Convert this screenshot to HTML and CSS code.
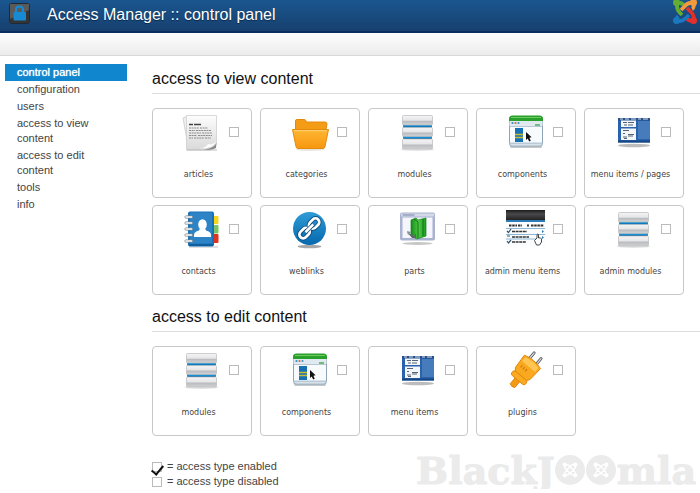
FILE: index.html
```html
<!DOCTYPE html>
<html lang="en">
<head>
  <meta charset="UTF-8">
  <title>Access Manager :: control panel</title>
  <link rel="stylesheet" href="styles.css">
</head>
<body>

  <!-- Shared icons -->
  <svg class="sprite" aria-hidden="true">
    <defs>
      <linearGradient id="silver" x1="0" y1="0" x2="0" y2="1">
        <stop offset="0" stop-color="#f4f4f5"/>
        <stop offset="0.5" stop-color="#e6e6e8"/>
        <stop offset="0.6" stop-color="#b9bbbf"/>
        <stop offset="1" stop-color="#d2d3d5"/>
      </linearGradient>
      <linearGradient id="orange" x1="0" y1="0" x2="0" y2="1">
        <stop offset="0" stop-color="#ffb733"/>
        <stop offset="1" stop-color="#f7960f"/>
      </linearGradient>
      <linearGradient id="blue" x1="0" y1="0" x2="0" y2="1">
        <stop offset="0" stop-color="#2f9bd6"/>
        <stop offset="1" stop-color="#0669ae"/>
      </linearGradient>
      <linearGradient id="green" x1="0" y1="0" x2="1" y2="0">
        <stop offset="0" stop-color="#148c1c"/>
        <stop offset="0.5" stop-color="#4fc845"/>
        <stop offset="1" stop-color="#1c9c20"/>
      </linearGradient>
      <linearGradient id="black" x1="0" y1="0" x2="0" y2="1">
        <stop offset="0" stop-color="#1b1b1b"/>
        <stop offset="0.4" stop-color="#4a4a4c"/>
        <stop offset="1" stop-color="#222"/>
      </linearGradient>
      <linearGradient id="paper" x1="0" y1="0" x2="0" y2="1">
        <stop offset="0" stop-color="#fdfdfd"/>
        <stop offset="1" stop-color="#d9d9d9"/>
      </linearGradient>
    </defs>

    <symbol id="icon-articles" viewBox="0 0 44 44">
      <path d="M5 8l5-2 3 24-3 6z" fill="#efefef" stroke="#c4c4c4" stroke-width=".7"/>
      <path d="M8.500 5.500h30V33c-1 4-3 6-7 7h-23z" fill="url(#paper)" stroke="#cfcfcf" stroke-width=".8"/>
      <path d="M9 40h30" stroke="#bbb" stroke-width="1"/>
      <path d="M11 14.500h4m1 0h7" stroke="#444" stroke-width="1.700"/>
      <path d="M11 18h10m1 0h8M11 20.500h6m1 0h15M11 23h12m1 0h10M11 25.500h8m1 0h14M11 28h4m1 0h10m1 0h6" stroke="#8b8b8b" stroke-width="1" stroke-dasharray="2 .6"/>
      <path d="M26 39c6 0 10-2 12.500-6l-.5 5c-4 2-8 2-12 1z" fill="#888"/>
      <path d="M21 38c6 0 8-2 9-4 3 1 6 0 8.500-3-3 6-9 8-17.500 7z" fill="#fff"/>
    </symbol>

    <symbol id="icon-folder" viewBox="0 0 44 44">
      <ellipse cx="24" cy="39.500" rx="14" ry="1.500" fill="#e8e4de"/>
      <path d="M9.500 22V11q0-1.500 1.500-1.500h7q1.500 0 2 1.500l.5 1H39q2 0 2 2l-1.500 8z" fill="#f59c17" stroke="#e38a0c" stroke-width="1"/>
      <path d="M6.500 19.500h36l-3.500 17q-.3 2-2 2H12q-1.700 0-2-2z" fill="url(#orange)" stroke="#e58b0b" stroke-width="1"/>
      <path d="M8 20.700h33" stroke="#ffd27a" stroke-width="1"/>
    </symbol>

    <symbol id="icon-modules" viewBox="0 0 44 44">
      <ellipse cx="23.500" cy="39.500" rx="17" ry="1.500" fill="#e4e4e4"/>
      <path d="M9 15h29v14H9z" fill="#1590d6"/>
      <path d="M10 17h27M10 28.500h27" stroke="#0b65a3" stroke-width="1"/>
      <rect x="8.500" y="5.500" width="30" height="9.500" rx="1" fill="url(#silver)" stroke="#b9babd" stroke-width=".7"/>
      <rect x="8.500" y="17.500" width="30" height="9" rx="1" fill="url(#silver)" stroke="#b9babd" stroke-width=".7"/>
      <rect x="8.500" y="29" width="30" height="10" rx="1" fill="url(#silver)" stroke="#b9babd" stroke-width=".7"/>
    </symbol>

    <symbol id="icon-components" viewBox="0 0 44 44">
      <rect x="8" y="35" width="32" height="3" rx="1.500" fill="#c3c8cc"/>
      <rect x="7.500" y="6.500" width="33" height="29.500" rx="2.500" fill="#f8fbfd" stroke="#8fa5b6" stroke-width="1"/>
      <path d="M7 11V9q0-3.500 3.500-3.500h27Q41 5.500 41 9v2z" fill="#28a02b"/>
      <path d="M9 7.500h30" stroke="#6dcb5d" stroke-width="1"/>
      <path d="M7.500 11h33v5h-33z" fill="#dfe9ef"/>
      <path d="M8 16.500h32" stroke="#9db0bf" stroke-width=".7"/>
      <circle cx="10.500" cy="13" r="1.100" fill="#2f91c9"/><circle cx="13.500" cy="13" r="1.100" fill="#e9632c"/><circle cx="16.500" cy="13" r="1.100" fill="#3b95cd"/>
      <path d="M33 15h5" stroke="#4fab53" stroke-width="1.500"/>
      <path d="M8 33.500h32" stroke="#b9c9d6" stroke-width="2"/>
      <rect x="13" y="18" width="8" height="14" fill="#1672b5"/>
      <path d="M13 24.500h8M13 27.500h8" stroke="#c8bd37" stroke-width="1.500"/>
      <path d="M24 22v8l1.700-1.500 1.500 3 1.600-.8-1.400-3 2.200-.4z" fill="#111"/>
    </symbol>

    <symbol id="icon-menu" viewBox="0 0 44 44">
      <ellipse cx="24" cy="35.500" rx="16" ry="1.700" fill="#bcbcbc"/>
      <rect x="8" y="8" width="32" height="24.500" fill="#2963ae"/>
      <path d="M8 8h32v2.500H8z" fill="#274f88"/>
      <path d="M10 9h3m2 0h4m2 0h5m2 0h3m2 0h5" stroke="#d9e3ef" stroke-width="1"/>
      <path d="M28 11h12v18H28z" fill="#477cbc"/>
      <path d="M11 10.500h15V17H11zM11 18.500h15V30H11z" fill="#f4f6f8"/>
      <path d="M13 12.500h4m1 0h6M14 15h3m1 0h5M13 20.500h6M13 23.500h2m3 1h6M13 27h4m1-1h5M14 28.500h3" stroke="#536478" stroke-width="1"/>
      <path d="M8 31.500h32" stroke="#164783" stroke-width="2"/>
    </symbol>

    <symbol id="icon-contacts" viewBox="0 0 44 44">
      <path d="M11 40h29" stroke="#d6d6d6" stroke-width="1.500"/>
      <rect x="34" y="9" width="6.500" height="8" rx="1" fill="#f7d51c"/>
      <rect x="34" y="18" width="6.500" height="8.500" rx="1" fill="#7cc565"/>
      <rect x="34" y="27" width="6.500" height="9" rx="1" fill="#df3520"/>
      <rect x="10" y="4.500" width="26" height="35" rx="2" fill="#1872b9"/>
      <rect x="12" y="5.500" width="22" height="31" rx="1" fill="#2c84c7"/>
      <path d="M11 38h24" stroke="#0c5894" stroke-width="1.500"/>
      <path d="M8 10h5.500M8 16h5.500M8 22h5.500M8 28h5.500M8 34h5.500" stroke="#77838c" stroke-width="3" stroke-linecap="round"/>
      <path d="M8 10h5.500M8 16h5.500M8 22h5.500M8 28h5.500M8 34h5.500" stroke="#fff" stroke-width="1.700" stroke-linecap="round"/>
      <ellipse cx="24.500" cy="17.500" rx="4.300" ry="5.300" fill="#fff"/>
      <path d="M16 30v-2q0-3.500 5-4.500l1-2h5l1 2q5 1 5 4.500v2z" fill="#fff"/>
    </symbol>

    <symbol id="icon-link" viewBox="0 0 44 44">
      <ellipse cx="23.500" cy="39.500" rx="12" ry="1.700" fill="#a8a8a8"/>
      <circle cx="23.500" cy="21.500" r="16.500" fill="url(#blue)"/>
      <g fill="none" transform="rotate(-45 23.500 21.500)">
        <g stroke="#0c4d80" stroke-width="4.500">
          <rect x="11" y="17.500" width="11.500" height="7.500" rx="3.700"/>
          <rect x="24.500" y="17.500" width="11.500" height="7.500" rx="3.700"/>
        </g>
        <g stroke="#fff" stroke-width="2.700">
          <rect x="11" y="17.500" width="11.500" height="7.500" rx="3.700"/>
          <rect x="24.500" y="17.500" width="11.500" height="7.500" rx="3.700"/>
          <path d="M18 21.300h11" stroke="#0c4d80" stroke-width="4"/>
          <path d="M18 21.300h11" stroke-width="2.500"/>
        </g>
      </g>
    </symbol>

    <symbol id="icon-parts" viewBox="0 0 44 44">
      <ellipse cx="23.500" cy="36.500" rx="15" ry="1.500" fill="#c6c6c6"/>
      <rect x="6" y="5.500" width="35" height="28" rx="2" fill="#a9b2cf"/>
      <path d="M7 6.500h33v3H7z" fill="#d4d9e8"/>
      <path d="M8.500 8h12" stroke="#7884ab" stroke-width="1"/>
      <rect x="8.500" y="10.500" width="30" height="20.500" fill="#f4f6fb"/>
      <path d="M17 13l5-2 2 2 8-2v18l-9 3-6-3z" fill="url(#green)" stroke="#16801c" stroke-width=".7"/>
      <path d="M20 12l4 3v16M29 12v17" stroke="#0f7417" stroke-width="1" fill="none"/>
      <path d="M13 25l5 6h4v-5l-2 3z" fill="#5d6764"/>
      <path d="M13 24l4 1-3 3z" fill="#8a9391"/>
    </symbol>

    <symbol id="icon-admin-menu" viewBox="0 0 44 44">
      <rect x="4" y="3" width="39" height="36" fill="#fbfcfd"/>
      <rect x="4" y="3" width="39" height="10" fill="url(#black)"/>
      <path d="M4 14h39" stroke="#2c7cb8" stroke-width="2"/>
      <path d="M7 18.500h8m1 0h4m5 0h2m2 0h13" stroke="#333" stroke-width="2" stroke-dasharray="2.500 .7"/>
      <path d="M4 21.500h39M4 27.500h39M4 32h35" stroke="#8fb8d4" stroke-width="1"/>
      <path d="M10 24.500h15M10 30h17M10 35h14" stroke="#333" stroke-width="1.500" stroke-dasharray="3 .6"/>
      <path d="M5 24l1.500 1.500L9 22M5 29h3M5 34l1.500 2L9 33" stroke="#35556e" stroke-width="1.200" fill="none"/>
      <path d="M40 23l2 1.500-2 1.500zM40 29l2 1.500-2 1.500z" fill="#2879b5"/>
      <path d="M35 31v-3.500q1-1 1.500 0V31q2-1 3 1v3l-2 3h-3l-2-4.500z" fill="#fff" stroke="#333" stroke-width=".9"/>
    </symbol>

    <symbol id="icon-plug" viewBox="0 0 44 44">
      <g transform="rotate(40 23 22)">
        <path d="M19 11V3M28 11V3" stroke="#5b5e62" stroke-width="3" stroke-linecap="round"/>
        <path d="M19 11V3M28 11V3" stroke="#d8dadd" stroke-width="1.200" stroke-linecap="round"/>
        <path d="M20.500 33h6v9q-3 2-6 0z" fill="#f59a12" stroke="#d67b08" stroke-width=".8"/>
        <path d="M13 11q10.500-3.500 21 0l-1 15q-2 4-5 5h-9q-3-1-5-5z" fill="#f9a81f" stroke="#dd850a" stroke-width=".9"/>
        <path d="M15 12q9-2.500 17 0v5H15z" fill="#ffc653"/>
        <rect x="14.500" y="29" width="18" height="5.500" rx="2.500" fill="#fbaa22" stroke="#dd850a" stroke-width=".9"/>
        <path d="M18 20v3M21 20v3M24 20v3" stroke="#c87308" stroke-width="1"/>
      </g>
    </symbol>

    <symbol id="joomla-mark" viewBox="0 0 24 24">
      <g fill="none" stroke="currentColor" stroke-width="2">
        <path d="M4 4q5-1 8 3l5 5q3 3 3 8M20 4q1 5-3 8l-5 5q-3 3-8 3M20 4q-5-1-8 3l-5 5q-3 3-3 8M4 4q-1 5 3 8l5 5q3 3 8 3"/>
      </g>
      <g fill="currentColor">
        <circle cx="4" cy="4" r="3.200"/><circle cx="20" cy="4" r="3.200"/>
        <circle cx="20" cy="20" r="3.200"/><circle cx="4" cy="20" r="3.200"/>
      </g>
    </symbol>
  </svg>

  <header class="header">
    <svg class="lock" viewBox="0 0 22 22" aria-hidden="true">
      <rect x=".5" y=".5" width="20" height="20" rx="2" fill="#343434" stroke="#202a35"/>
      <path d="M1 1h19v6L1 16z" fill="#5a5a5a"/>
      <path d="M7 10V6.500q0-3 3.500-3t3.500 3V10" fill="none" stroke="#168bd3" stroke-width="2"/>
      <rect x="4.500" y="9" width="12.500" height="8.500" rx="1" fill="#168bd3"/>
    </svg>
    <h1>Access Manager :: control panel</h1>
    <svg class="joomla" viewBox="0 0 24 24" aria-hidden="true">
      <g fill="none" stroke-width="3.800" stroke-linejoin="round">
        <path d="M4 3v3q0 4 3 7l2 2M4 3q4-1 7 2" stroke="#62ad34"/>
        <path d="M21 3h-3q-4 0-6 3l-4 4M21 3q0 5-2 6" stroke="#f39a3d"/>
        <path d="M21 21v-3q0-3-3-6l-4-4M21 21q-5 0-7-2" stroke="#e3302b"/>
        <path d="M4 21h3q3 0 6-3l3-3M4 21q0-4 1-5" stroke="#1c78be"/>
      </g>
      <circle cx="3.500" cy="2.500" r="3.500" fill="#62ad34"/>
      <circle cx="20.500" cy="2.500" r="3.500" fill="#f39a3d"/>
      <circle cx="20.500" cy="20.500" r="3.500" fill="#e3302b"/>
      <circle cx="3.500" cy="20.500" r="3.500" fill="#1c78be"/>
    </svg>
  </header>
  <div class="toolbar"></div>

  <div class="page">
    <nav class="sidebar">
      <ul>
        <li><a class="active" href="#">control panel</a></li>
        <li><a href="#">configuration</a></li>
        <li><a href="#">users</a></li>
        <li><a href="#">access to view content</a></li>
        <li><a href="#">access to edit content</a></li>
        <li><a href="#">tools</a></li>
        <li><a href="#">info</a></li>
      </ul>
    </nav>

    <main class="content">
      <section>
        <h2>access to view content</h2>
        <div class="cards">
          <div class="card">
            <div class="card-top"><svg class="icon"><use href="#icon-articles"/></svg><input type="checkbox" id="view-articles"></div>
            <label for="view-articles">articles</label>
          </div>
          <div class="card">
            <div class="card-top"><svg class="icon"><use href="#icon-folder"/></svg><input type="checkbox" id="view-categories"></div>
            <label for="view-categories">categories</label>
          </div>
          <div class="card">
            <div class="card-top"><svg class="icon"><use href="#icon-modules"/></svg><input type="checkbox" id="view-modules"></div>
            <label for="view-modules">modules</label>
          </div>
          <div class="card">
            <div class="card-top"><svg class="icon"><use href="#icon-components"/></svg><input type="checkbox" id="view-components"></div>
            <label for="view-components">components</label>
          </div>
          <div class="card">
            <div class="card-top"><svg class="icon"><use href="#icon-menu"/></svg><input type="checkbox" id="view-menu"></div>
            <label for="view-menu">menu items / pages</label>
          </div>
          <div class="card">
            <div class="card-top"><svg class="icon"><use href="#icon-contacts"/></svg><input type="checkbox" id="view-contacts"></div>
            <label for="view-contacts">contacts</label>
          </div>
          <div class="card">
            <div class="card-top"><svg class="icon"><use href="#icon-link"/></svg><input type="checkbox" id="view-weblinks"></div>
            <label for="view-weblinks">weblinks</label>
          </div>
          <div class="card">
            <div class="card-top"><svg class="icon"><use href="#icon-parts"/></svg><input type="checkbox" id="view-parts"></div>
            <label for="view-parts">parts</label>
          </div>
          <div class="card">
            <div class="card-top"><svg class="icon"><use href="#icon-admin-menu"/></svg><input type="checkbox" id="view-admin-menu"></div>
            <label for="view-admin-menu">admin menu items</label>
          </div>
          <div class="card">
            <div class="card-top"><svg class="icon"><use href="#icon-modules"/></svg><input type="checkbox" id="view-admin-modules"></div>
            <label for="view-admin-modules">admin modules</label>
          </div>
        </div>
      </section>

      <section>
        <h2>access to edit content</h2>
        <div class="cards">
          <div class="card">
            <div class="card-top"><svg class="icon"><use href="#icon-modules"/></svg><input type="checkbox" id="edit-modules"></div>
            <label for="edit-modules">modules</label>
          </div>
          <div class="card">
            <div class="card-top"><svg class="icon"><use href="#icon-components"/></svg><input type="checkbox" id="edit-components"></div>
            <label for="edit-components">components</label>
          </div>
          <div class="card">
            <div class="card-top"><svg class="icon"><use href="#icon-menu"/></svg><input type="checkbox" id="edit-menu"></div>
            <label for="edit-menu">menu items</label>
          </div>
          <div class="card">
            <div class="card-top"><svg class="icon"><use href="#icon-plug"/></svg><input type="checkbox" id="edit-plugins"></div>
            <label for="edit-plugins">plugins</label>
          </div>
        </div>
      </section>

      <footer class="footer">
        <div class="legend">
          <div><input type="checkbox" id="type-enabled" checked><label for="type-enabled">= access type enabled</label></div>
          <div><input type="checkbox" id="type-disabled"><label for="type-disabled">= access type disabled</label></div>
        </div>
        <div class="brand">
          <span>BlackJ</span>
          <span class="ball"><svg><use href="#joomla-mark"/></svg></span>
          <span class="ball"><svg><use href="#joomla-mark"/></svg></span>
          <span>mla</span>
        </div>
      </footer>
    </main>
  </div>

</body>
</html>
```
FILE: styles.css
```css
* {
  box-sizing: border-box;
}

body {
  margin: 0;
  font-family: "Liberation Sans", Arial, sans-serif;
  font-size: 11px;
  line-height: 15px;
  color: #444;
  background-color: #fff;
}

/* Kept rendered at zero size so the gradients still work */
.sprite {
  display: block;
  width: 0;
  height: 0;
}

/* Header */
.header {
  display: flex;
  align-items: flex-start;
  height: 33px;
  padding: 0 3px 0 9px;
  background: linear-gradient(#1a568f, #17406f);
  border-bottom: 2px solid #0e2f60;
}

.header h1 {
  flex: 1;
  margin: 0 0 0 16px;
  font-size: 16px;
  line-height: 30px;
  font-weight: normal;
  color: #fff;
  text-shadow: 0 1px 1px #0b2748;
}

.lock {
  width: 22px;
  height: 22px;
  margin-top: 3px;
}

.joomla {
  width: 24px;
  height: 24px;
}

.toolbar {
  height: 23px;
  background: linear-gradient(#fff, #ebebeb);
  border-bottom: 1px solid #d8d8d8;
}

.page {
  display: flex;
  padding-top: 8px;
}

/* Sidebar */
.sidebar {
  flex: 0 0 127px;
  padding-left: 5px;
}

.sidebar ul {
  list-style: none;
  margin: 0;
  padding: 0;
}

.sidebar a {
  display: block;
  padding: 1px 32px 1px 12px;
  color: #444;
  text-decoration: none;
}

.sidebar a.active {
  background-color: #0f86cd;
  color: #fff;
  text-shadow: 0 0 1px #fff;
}

/* Content */
.content {
  flex: 1;
  padding: 3px 0 0 25px;
}

h2 {
  margin: 0 0 14px;
  padding-bottom: 2px;
  font-size: 16px;
  line-height: 24px;
  font-weight: normal;
  color: #111;
  border-bottom: 1px solid #ddd;
}

section + section {
  margin-top: 10px;
}

.cards {
  display: grid;
  grid-template-columns: repeat(5, 100px);
  gap: 7px 8px;
}

.card {
  height: 90px;
  padding: 1px 7px 0 0;
  border: 1px solid #c8c8c8;
  border-radius: 4px;
  text-align: center;
}

.card-top {
  display: flex;
  align-items: center;
  gap: 7px;
  padding-left: 25px;
  margin-bottom: 13px;
}

.icon {
  flex: none;
  width: 44px;
  height: 44px;
}

.card label {
  display: block;
  font-family: "DejaVu Sans", Verdana, sans-serif;
  font-size: 8px;
  white-space: nowrap;
}

input[type="checkbox"] {
  appearance: none;
  flex: none;
  width: 10px;
  height: 10px;
  margin: 0;
  border: 1px solid #bbb;
  background-color: #fff;
}

/* Footer */
.footer {
  display: flex;
  align-items: flex-start;
  justify-content: space-between;
  padding-top: 19px;
  padding-right: 4px;
}

.legend {
  padding-top: 4px;
}

.legend div {
  display: flex;
  align-items: center;
  gap: 5px;
}

.legend input[type="checkbox"] {
  display: grid;
  place-items: center;
}

.legend input:checked::before {
  content: "";
  width: 5px;
  height: 10px;
  margin-bottom: 4px;
  border: solid #111;
  border-width: 0 2px 2px 0;
  transform: rotate(40deg);
}

.brand {
  display: flex;
  align-items: center;
  font-family: "DejaVu Serif", serif;
  font-size: 38px;
  line-height: 25px;
  font-weight: bold;
  color: #ebebeb;
  -webkit-text-stroke: 1px #ebebeb;
}

.ball {
  display: grid;
  place-items: center;
  width: 30px;
  height: 30px;
  margin-right: 1px;
  border-radius: 50%;
  background-color: #ebebeb;
  color: #fff;
}

.ball svg {
  width: 16px;
  height: 16px;
}
```
